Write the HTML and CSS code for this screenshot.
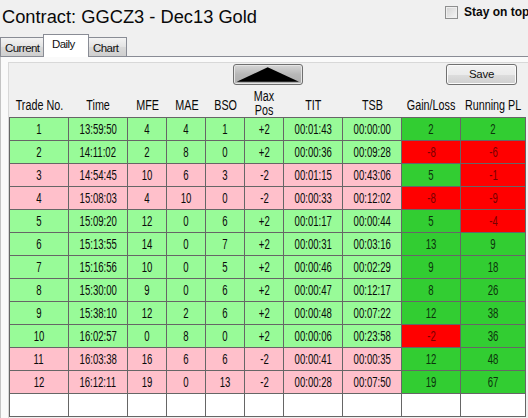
FILE: index.html
```html
<!DOCTYPE html>
<html>
<head>
<meta charset="utf-8">
<title>Contract: GGCZ3 - Dec13 Gold</title>
<link rel="stylesheet" href="styles.css">
</head>
<body>
<div class="window">
  <div class="titlebar">
    <div class="title">Contract: GGCZ3 - Dec13 Gold</div>
    <label class="stay"><span class="check"></span><span class="stay-text">Stay on top</span></label>
  </div>
  <div class="tabs">
    <div class="tab tab-current">Current</div>
    <div class="tab tab-daily active">Daily</div>
    <div class="tab tab-chart">Chart</div>
  </div>
  <div class="page">
    <div class="panel">
      <div class="toolbar">
        <div class="arrow-btn">
          <svg width="68" height="19" viewBox="0 0 68 19"><polygon points="33.7,2.3 2.7,16.8 65,16.8" fill="#000"/></svg>
        </div>
        <div class="save-btn">Save</div>
      </div>
      <div class="head">
        <div class="h"><span>Trade No.</span></div>
        <div class="h"><span>Time</span></div>
        <div class="h"><span>MFE</span></div>
        <div class="h"><span>MAE</span></div>
        <div class="h"><span>BSO</span></div>
        <div class="h h2"><span>Max<br>Pos</span></div>
        <div class="h"><span>TIT</span></div>
        <div class="h"><span>TSB</span></div>
        <div class="h"><span>Gain/Loss</span></div>
        <div class="h"><span>Running PL</span></div>
      </div>
      <div class="rows">
        <div class="row g"><div class="c"><span>1</span></div><div class="c"><span>13:59:50</span></div><div class="c"><span>4</span></div><div class="c"><span>4</span></div><div class="c"><span>1</span></div><div class="c"><span>+2</span></div><div class="c"><span>00:01:43</span></div><div class="c"><span>00:00:00</span></div><div class="c up"><span>2</span></div><div class="c up"><span>2</span></div></div>
        <div class="row g"><div class="c"><span>2</span></div><div class="c"><span>14:11:02</span></div><div class="c"><span>2</span></div><div class="c"><span>8</span></div><div class="c"><span>0</span></div><div class="c"><span>+2</span></div><div class="c"><span>00:00:36</span></div><div class="c"><span>00:09:28</span></div><div class="c dn"><span>-8</span></div><div class="c dn"><span>-6</span></div></div>
        <div class="row p"><div class="c"><span>3</span></div><div class="c"><span>14:54:45</span></div><div class="c"><span>10</span></div><div class="c"><span>6</span></div><div class="c"><span>3</span></div><div class="c"><span>-2</span></div><div class="c"><span>00:01:15</span></div><div class="c"><span>00:43:06</span></div><div class="c up"><span>5</span></div><div class="c dn"><span>-1</span></div></div>
        <div class="row p"><div class="c"><span>4</span></div><div class="c"><span>15:08:03</span></div><div class="c"><span>4</span></div><div class="c"><span>10</span></div><div class="c"><span>0</span></div><div class="c"><span>-2</span></div><div class="c"><span>00:00:33</span></div><div class="c"><span>00:12:02</span></div><div class="c dn"><span>-8</span></div><div class="c dn"><span>-9</span></div></div>
        <div class="row g"><div class="c"><span>5</span></div><div class="c"><span>15:09:20</span></div><div class="c"><span>12</span></div><div class="c"><span>0</span></div><div class="c"><span>6</span></div><div class="c"><span>+2</span></div><div class="c"><span>00:01:17</span></div><div class="c"><span>00:00:44</span></div><div class="c up"><span>5</span></div><div class="c dn"><span>-4</span></div></div>
        <div class="row g"><div class="c"><span>6</span></div><div class="c"><span>15:13:55</span></div><div class="c"><span>14</span></div><div class="c"><span>0</span></div><div class="c"><span>7</span></div><div class="c"><span>+2</span></div><div class="c"><span>00:00:31</span></div><div class="c"><span>00:03:16</span></div><div class="c up"><span>13</span></div><div class="c up"><span>9</span></div></div>
        <div class="row g"><div class="c"><span>7</span></div><div class="c"><span>15:16:56</span></div><div class="c"><span>10</span></div><div class="c"><span>0</span></div><div class="c"><span>5</span></div><div class="c"><span>+2</span></div><div class="c"><span>00:00:46</span></div><div class="c"><span>00:02:29</span></div><div class="c up"><span>9</span></div><div class="c up"><span>18</span></div></div>
        <div class="row g"><div class="c"><span>8</span></div><div class="c"><span>15:30:00</span></div><div class="c"><span>9</span></div><div class="c"><span>0</span></div><div class="c"><span>6</span></div><div class="c"><span>+2</span></div><div class="c"><span>00:00:47</span></div><div class="c"><span>00:12:17</span></div><div class="c up"><span>8</span></div><div class="c up"><span>26</span></div></div>
        <div class="row g"><div class="c"><span>9</span></div><div class="c"><span>15:38:10</span></div><div class="c"><span>12</span></div><div class="c"><span>2</span></div><div class="c"><span>6</span></div><div class="c"><span>+2</span></div><div class="c"><span>00:00:48</span></div><div class="c"><span>00:07:22</span></div><div class="c up"><span>12</span></div><div class="c up"><span>38</span></div></div>
        <div class="row g"><div class="c"><span>10</span></div><div class="c"><span>16:02:57</span></div><div class="c"><span>0</span></div><div class="c"><span>8</span></div><div class="c"><span>0</span></div><div class="c"><span>+2</span></div><div class="c"><span>00:00:06</span></div><div class="c"><span>00:23:58</span></div><div class="c dn"><span>-2</span></div><div class="c up"><span>36</span></div></div>
        <div class="row p"><div class="c"><span>11</span></div><div class="c"><span>16:03:38</span></div><div class="c"><span>16</span></div><div class="c"><span>6</span></div><div class="c"><span>6</span></div><div class="c"><span>-2</span></div><div class="c"><span>00:00:41</span></div><div class="c"><span>00:00:35</span></div><div class="c up"><span>12</span></div><div class="c up"><span>48</span></div></div>
        <div class="row p"><div class="c"><span>12</span></div><div class="c"><span>16:12:11</span></div><div class="c"><span>19</span></div><div class="c"><span>0</span></div><div class="c"><span>13</span></div><div class="c"><span>-2</span></div><div class="c"><span>00:00:28</span></div><div class="c"><span>00:07:50</span></div><div class="c up"><span>19</span></div><div class="c up"><span>67</span></div></div>
        <div class="row e"><div class="c"></div><div class="c"></div><div class="c"></div><div class="c"></div><div class="c"></div><div class="c"></div><div class="c"></div><div class="c"></div><div class="c"></div><div class="c"></div></div>
      </div>
    </div>
  </div>
</div>
</body>
</html>
```
FILE: styles.css
```css
html, body {
  margin: 0;
  padding: 0;
}
body {
  width: 528px;
  height: 418px;
  overflow: hidden;
  background: #f0f0f0;
  font-family: "Liberation Sans", Arial, sans-serif;
  color: #000;
}
.window {
  width: 528px;
  height: 418px;
  display: flex;
  flex-direction: column;
}

/* title bar */
.titlebar {
  height: 34px;
  display: flex;
  justify-content: space-between;
  align-items: flex-start;
}
.title {
  padding: 6px 0 0 2px;
  font-size: 18.3px;
  line-height: 21px;
  color: #0a0a0a;
  white-space: nowrap;
}
.stay {
  width: 83px;
  display: flex;
  align-items: flex-start;
  white-space: nowrap;
  padding-top: 5px;
}
.check {
  width: 11px;
  height: 11px;
  margin-top: 1px;
  border: 1px solid #8e8f8f;
  background: linear-gradient(135deg, #d2d2d2, #f6f6f6);
  box-shadow: inset 0 0 0 1px #efefef;
  flex: none;
}
.stay-text {
  margin-left: 6px;
  font-weight: bold;
  font-size: 12px;
  line-height: 14px;
  color: #0a0a0a;
}

/* tabs */
.tabs {
  height: 22px;
  display: flex;
  align-items: flex-end;
  border-bottom: 1px solid #898c95;
}
.tab {
  box-sizing: border-box;
  height: 19px;
  border: 1px solid #898c95;
  border-bottom: none;
  font-size: 11.5px;
  line-height: 13px;
  letter-spacing: -0.55px;
  padding-top: 4px;
  padding-left: 4px;
  background: linear-gradient(#f3f3f3, #e3e3e3 50%, #d9d9d9 51%, #cfcfcf);
  color: #111;
  white-space: nowrap;
}
.tab + .tab {
  margin-left: -1px;
}
.tab-current { width: 44px; }
.tab-daily { width: 46px; }
.tab-chart { width: 39px; }
.tab.active {
  height: 23px;
  margin-bottom: -1px;
  padding-top: 3px;
  padding-left: 8px;
  background: #fff;
  position: relative;
  z-index: 1;
}

/* page */
.page {
  flex: 1;
  background: #fafafa;
  border-left: 1px solid #c4c4c4;
  padding: 5px 0 0 7px;
  overflow: hidden;
}
.panel {
  width: 540px;
  height: 400px;
  background: #f0f0f0;
  border-top: 1px solid #d8d8d8;
  border-left: 1px solid #d8d8d8;
  padding-top: 1px;
}

/* toolbar */
.toolbar {
  height: 21px;
  display: flex;
  margin-bottom: 3px;
}
.arrow-btn {
  box-sizing: border-box;
  width: 70px;
  height: 21px;
  margin-left: 224px;
  border: 1px solid #6f6f6f;
  border-radius: 3px;
  background: linear-gradient(#d6d6d6, #b7b7b7 50%, #adadad);
  box-shadow: inset 0 0 0 1px #e4e4e4;
}
.arrow-btn svg {
  display: block;
}
.save-btn {
  box-sizing: border-box;
  width: 71px;
  height: 21px;
  margin-left: 143px;
  border: 1px solid #707070;
  border-radius: 3px;
  background: linear-gradient(#f2f2f2, #ebebeb 50%, #dddddd 51%, #cfcfcf);
  box-shadow: inset 0 0 0 1px #fbfbfb;
  font-size: 11.5px;
  line-height: 19px;
  letter-spacing: -0.3px;
  text-align: center;
  color: #111;
}

/* grid */
.head,
.row {
  display: grid;
  grid-template-columns: 59px 59px 39px 39px 39px 39px 59px 59px 59px 65px;
}
.head {
  height: 29px;
  margin-left: 1px;
}
.h {
  display: flex;
  align-items: flex-end;
  justify-content: center;
  padding-bottom: 4px;
  font-size: 13.8px;
  line-height: 15px;
  color: #0a0a0a;
  white-space: nowrap;
}
.h span {
  display: inline-block;
  transform: scaleX(0.78);
  text-align: center;
}
.h.h2 {
  padding-bottom: 0;
  line-height: 13.5px;
}
.rows {
  width: max-content;
  border-left: 1px solid #666;
  border-top: 1px solid #666;
}
.row {
  height: 23px;
}
.c {
  box-sizing: border-box;
  border-right: 1px solid #666;
  border-bottom: 1px solid #666;
  display: flex;
  align-items: center;
  justify-content: center;
  padding-top: 1px;
  font-size: 14.5px;
  line-height: 15px;
  color: #0a0a0a;
  white-space: nowrap;
}
.c span {
  display: inline-block;
  transform: scaleX(0.66);
}
.row.g .c { background: #98fb98; }
.row.p .c { background: #ffc0cb; }
.row.e .c { background: #fff; }
.row .c.up { background: #32cd32; color: #0c330c; }
.row .c.dn { background: #ff0000; color: #780000; }
```
